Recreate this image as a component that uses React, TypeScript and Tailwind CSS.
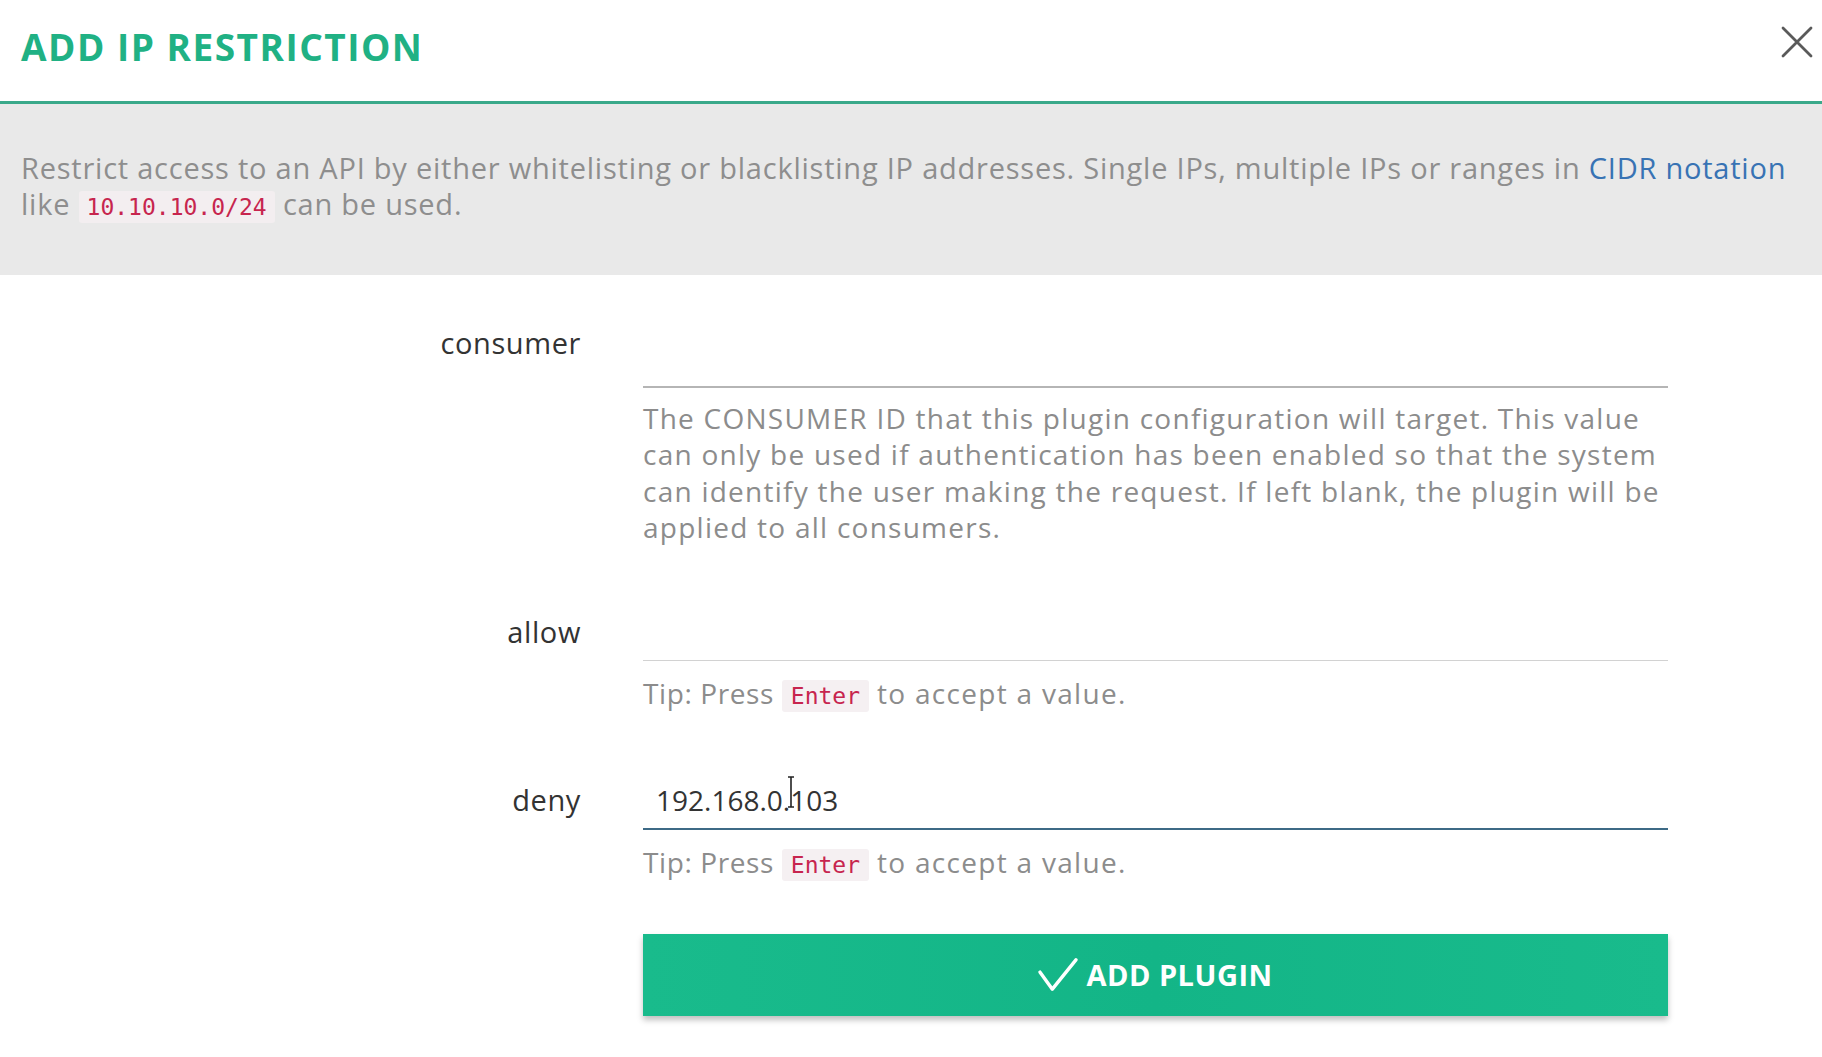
const body = '[font-family:"Open_Sans",sans-serif]';
const mono = "font-['DejaVu_Sans_Mono',monospace]";

function Tip() {
  return (
    <p className="whitespace-nowrap text-[28px] leading-[36px] tracking-[0.6px] text-[#8c8c8c]">
      Tip: Press{' '}
      <code className={`rounded-[3px] bg-[#f5f0f2] px-[9px] py-[3px] ${mono} text-[23px] tracking-normal text-[#c7254e]`}>
        Enter
      </code>{' '}
      <span className="tracking-[1.3px]">to accept a value.</span>
    </p>
  );
}

export default function App() {
  return (
    <div className={`min-h-screen w-full bg-white ${body}`}>
      {/* header */}
      <header className="flex h-[104px] items-start justify-between border-b-[3px] border-[#3aa98a] bg-white pl-[21px] pr-[10px]">
        <h1 className="mt-[22px] text-[37px] font-bold leading-[50px] tracking-[1.5px] text-[#20b184]">
          ADD IP RESTRICTION
        </h1>
        <button className="mt-[26px] mr-[-1px] text-[#5a5a5a]">
          <svg width="32" height="32" viewBox="0 0 32 32" fill="none" stroke="currentColor" strokeWidth="2.8" strokeLinecap="round">
            <path d="M2 2 30 30M30 2 2 30" />
          </svg>
        </button>
      </header>

      {/* description */}
      <section className="h-[171px] bg-[#e9e9e9] px-[21px] pt-[46px]">
        <p className="whitespace-nowrap text-[29px] leading-[36px] tracking-[0.77px] text-[#8e8e8e]">
          Restrict access to an API by either whitelisting or blacklisting IP addresses. Single IPs, multiple IPs or ranges in{' '}
          <a className="text-[#3873b4]">CIDR notation</a>
          <br />
          like{' '}
          <code className={`rounded-[3px] bg-[#f3eef0] px-[8px] py-[3px] ${mono} text-[23px] tracking-normal text-[#c7254e]`}>
            10.10.10.0/24
          </code>{' '}
          can be used.
        </p>
      </section>

      {/* form */}
      <main className="pt-[50px]">
        <div className="grid grid-cols-[581px_1025px] gap-x-[62px]">
          <label className="text-right text-[29px] font-medium leading-[36px] tracking-[0.6px] text-[#333]">consumer</label>
          <div>
            <div className="h-[63px] border-b-2 border-[#b5b5b5]" />
            <p className="mt-[12px] whitespace-nowrap text-[28px] leading-[36.3px] tracking-[1.25px] text-[#8c8c8c]">
              The CONSUMER ID that this plugin configuration will target. This value
              <br />
              can only be used if authentication has been enabled so that the system
              <br />
              can identify the user making the request. If left blank, the plugin will be
              <br />
              applied to all consumers.
            </p>
          </div>
        </div>

        <div className="mt-[69px] grid grid-cols-[581px_1025px] gap-x-[62px]">
          <label className="text-right text-[29px] font-medium leading-[36px] tracking-[0.6px] text-[#333]">allow</label>
          <div>
            <div className="h-[47px] border-b border-[#d2d2d2]" />
            <div className="mt-[14px]">
              <Tip />
            </div>
          </div>
        </div>

        <div className="mt-[68px] grid grid-cols-[581px_1025px] gap-x-[62px]">
          <label className="text-right text-[29px] font-medium leading-[36px] tracking-[0.6px] text-[#333]">deny</label>
          <div>
            <div className="relative h-[48px] border-b-2 border-[#3d6a86] pl-[13px] text-[28px] leading-[36px] text-[#333]">
              192.168.0.103
              <svg className="absolute left-[144px] top-[-6px]" width="8" height="32" viewBox="0 0 8 32" fill="none" stroke="#222" strokeWidth="1.6">
                <path d="M1 1h6M4 1v30M1 31h6" />
              </svg>
            </div>
            <div className="mt-[14px]">
              <Tip />
            </div>
          </div>
        </div>

        <div className="mt-[51px] grid grid-cols-[581px_1025px] gap-x-[62px]">
          <div />
          <button className="flex h-[82px] items-center justify-center gap-[8px] bg-gradient-to-r from-[#19bb8c] via-[#13b587] to-[#19bb8c] text-[29px] font-bold tracking-[0.5px] text-white shadow-[0_4px_6px_rgba(0,0,0,0.25)]">
            <svg width="40" height="34" viewBox="0 0 42 36" fill="none" stroke="currentColor" strokeWidth="3.6" strokeLinecap="round" strokeLinejoin="round">
              <path d="M2 15 15 33 40 2" />
            </svg>
            ADD PLUGIN
          </button>
        </div>
      </main>
    </div>
  );
}
